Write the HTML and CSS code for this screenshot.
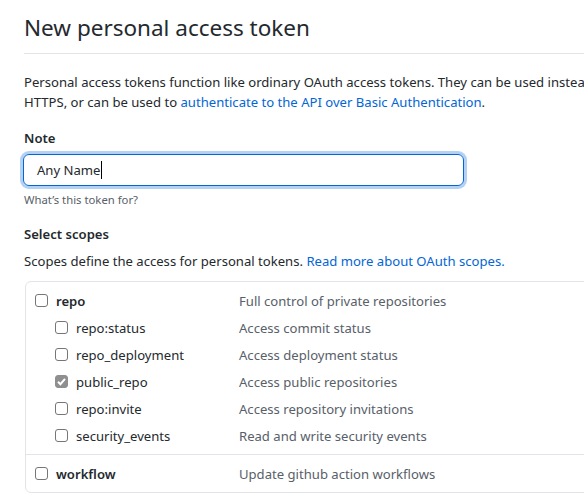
FILE: index.html
```html
<!DOCTYPE html>
<html lang="en">
<head>
<meta charset="utf-8">
<title>New personal access token</title>
<link rel="stylesheet" href="styles.css">
</head>
<body>
<main class="page">
  <h1 class="title">New personal access token</h1>
  <p class="intro">Personal access tokens function like ordinary OAuth access tokens. They can be used instead of a password for Git over<br>HTTPS, or can be used to <a href="#" class="link">authenticate to the API over Basic Authentication</a>.</p>

  <div class="field">
    <label class="label">Note</label>
    <div class="input"><span class="value">Any Name</span><span class="caret"></span></div>
    <p class="note">What’s this token for?</p>
  </div>

  <div class="field">
    <h2 class="label">Select scopes</h2>
    <p class="scopes-desc">Scopes define the access for personal tokens. <a href="#" class="link">Read more about OAuth scopes.</a></p>
  </div>

  <div class="scopes">
    <div class="group">
      <div class="row">
        <span class="name main"><span class="cb"></span>repo</span>
        <span class="desc">Full control of private repositories</span>
      </div>
      <div class="row">
        <span class="name sub"><span class="cb"></span>repo:status</span>
        <span class="desc">Access commit status</span>
      </div>
      <div class="row">
        <span class="name sub"><span class="cb"></span>repo_deployment</span>
        <span class="desc">Access deployment status</span>
      </div>
      <div class="row">
        <span class="name sub"><span class="cb checked"><svg viewBox="0 0 13 13" width="13" height="13"><path d="M3 6.8 L5.4 9.2 L10 3.8" fill="none" stroke="#fff" stroke-width="2"/></svg></span>public_repo</span>
        <span class="desc">Access public repositories</span>
      </div>
      <div class="row">
        <span class="name sub"><span class="cb"></span>repo:invite</span>
        <span class="desc">Access repository invitations</span>
      </div>
      <div class="row">
        <span class="name sub"><span class="cb"></span>security_events</span>
        <span class="desc">Read and write security events</span>
      </div>
    </div>
    <div class="group">
      <div class="row">
        <span class="name main"><span class="cb"></span>workflow</span>
        <span class="desc">Update github action workflows</span>
      </div>
    </div>
  </div>
</main>
</body>
</html>
```

FILE: styles.css
```css
html, body {
  margin: 0;
  overflow: hidden;
  background: #fff;
}
body {
  font-family: "Noto Sans", "Open Sans", sans-serif;
  font-size: 13.1px;
  line-height: 20px;
  color: #24292e;
}
.page {
  width: 900px;
  padding: 10px 0 0 24px;
}
.title {
  margin: 0;
  font-size: 22.5px;
  line-height: 36px;
  font-weight: 400;
  padding-bottom: 7px;
  border-bottom: 1px solid #e1e4e8;
}
.intro {
  margin: 18px 0 0;
}
.link {
  color: #0366d6;
  text-decoration: none;
}
.field {
  display: flex;
  flex-direction: column;
  align-items: flex-start;
}
.field:first-of-type {
  margin-top: 16px;
}
.label {
  margin: 0;
  font-size: 13.1px;
  line-height: 20px;
  font-weight: 600;
}
.input {
  margin-top: 6px;
  box-sizing: border-box;
  width: 441px;
  height: 32px;
  margin-left: -1px;
  border: 1px solid #0366d6;
  border-radius: 6px;
  box-shadow: 0 0 0 3px rgba(3, 102, 214, 0.3);
  padding: 0 13px;
  display: flex;
  align-items: center;
}
.caret {
  display: inline-block;
  width: 1px;
  height: 18px;
  background: #000;
  margin-left: 1px;
}
.note {
  margin: 5px 0 0;
  font-size: 11.3px;
  line-height: 18px;
  color: #586069;
}
.field + .field {
  margin-top: 15px;
}
.scopes-desc {
  margin: 7px 0 0;
}
.scopes {
  margin-top: 10px;
  margin-left: 1px;
  border: 1px solid #e1e4e8;
  border-radius: 6px;
  padding-left: 9px;
}
.group {
  padding: 5px 0;
}
.group + .group {
  border-top: 1px solid #e1e4e8;
  margin-left: -9px;
  padding-left: 9px;
}
.row {
  display: grid;
  grid-template-columns: 204px 1fr;
  height: 27px;
  align-items: center;
}
.name {
  display: flex;
  align-items: center;
  gap: 8px;
}
.name.main {
  font-weight: 600;
}
.name.sub {
  padding-left: 20px;
}
.desc {
  color: #586069;
}
.cb {
  box-sizing: border-box;
  width: 13px;
  height: 13px;
  border: 1px solid #767676;
  border-radius: 3px;
  background: #fff;
  display: inline-flex;
  flex: none;
}
.cb.checked {
  background: #8f8f8f;
  border-color: #8f8f8f;
}
.cb svg {
  display: block;
  margin: -1px;
}
```
